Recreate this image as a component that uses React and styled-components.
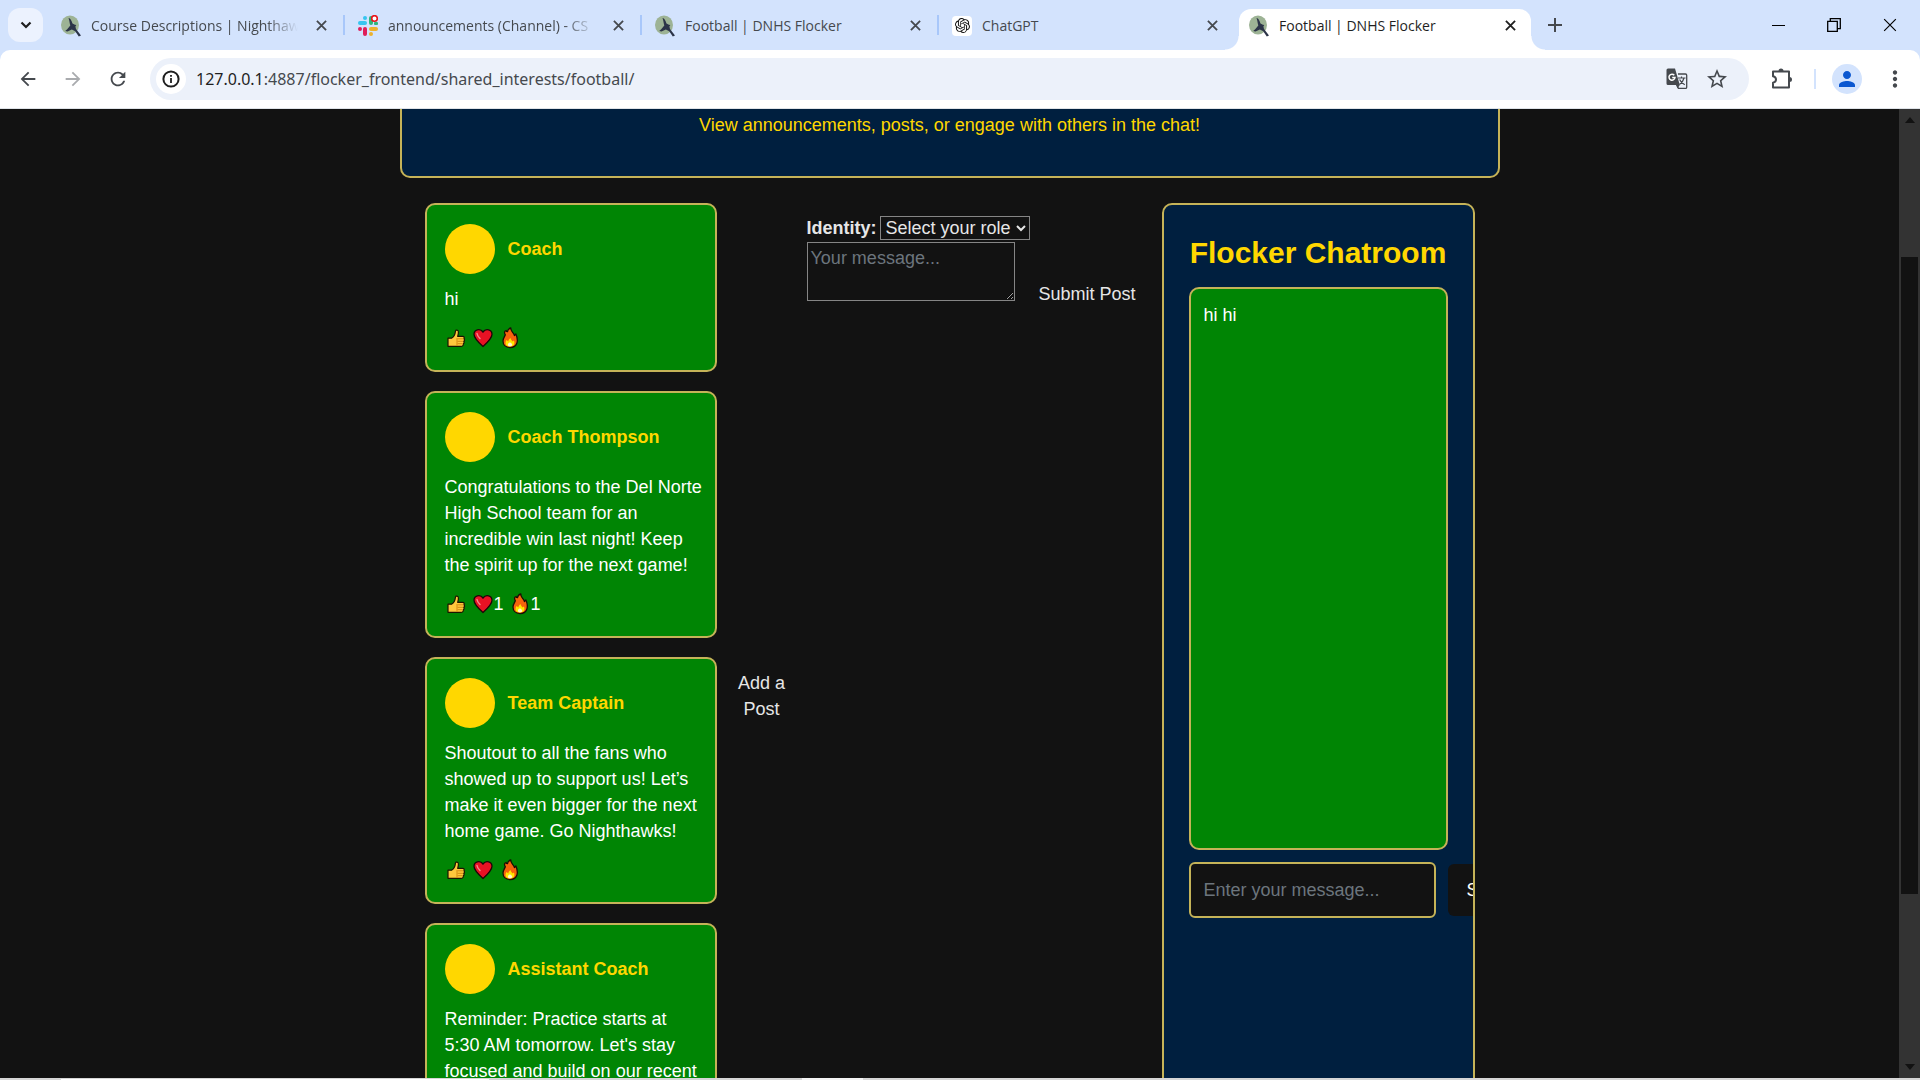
import React from "react";
import styled, { createGlobalStyle, css } from "styled-components";
import {
  MdArrowBack,
  MdArrowForward,
  MdMoreVert,
  MdPerson,
  MdRefresh,
  MdStarBorder,
} from "react-icons/md";
import { SiOpenai } from "react-icons/si";

const gold = "#c5b358";
const yellow = "#ffd700";
const navy = "#001f3f";
const green = "#008504";
const dark = "#121212";
const strip = "#d3e3fd";

const GlobalStyle = createGlobalStyle`
  *, *::before, *::after { box-sizing: border-box; }
  body { margin: 0; overflow: hidden; }
  button, input, select, textarea { font: inherit; color: inherit; margin: 0; }
  button { border: 0; background: none; padding: 0; }
  p, h2 { margin: 0; }
`;

const Window = styled.div`
  height: 100vh;
  display: flex;
  flex-direction: column;
  background: ${strip};
  font-family: "Open Sans", "Noto Sans", sans-serif;
  color: #1f1f1f;
`;

/* ---------- tab strip ---------- */

const TabStrip = styled.header`
  height: 50px;
  flex: none;
  display: flex;
  align-items: center;
`;

const SearchTabs = styled.button`
  width: 35px;
  height: 34px;
  margin: 0 8px;
  border-radius: 12px;
  background: #ecf2fe;
  display: grid;
  place-items: center;
`;

const Tabs = styled.nav`
  display: flex;
  align-self: stretch;
  padding-top: 9px;
  min-width: 0;
`;

const Tab = styled.div`
  position: relative;
  width: 297px;
  min-width: 0;
  padding: 0 17px 8px 10px;
  display: flex;
  align-items: center;
  font-size: 14px;
  line-height: 20px;
  color: #45494e;
  ${(p) =>
    p.$divider &&
    css`
      &::after {
        content: "";
        position: absolute;
        right: 3px;
        top: 6px;
        width: 2px;
        height: 20px;
        background: #a8c7fa;
      }
    `}
  ${(p) =>
    p.$active &&
    css`
      width: 292px;
      padding-right: 11px;
      color: #1f1f1f;
      background: #fff;
      border-radius: 12px 12px 0 0;
      &::before,
      &::after {
        content: "";
        position: absolute;
        bottom: 0;
        width: 14px;
        height: 14px;
      }
      &::before {
        left: -14px;
        background: radial-gradient(circle at 0 0, transparent 13px, #fff 14px);
      }
      &::after {
        right: -14px;
        background: radial-gradient(circle at 100% 0, transparent 13px, #fff 14px);
      }
    `}
`;

const TabTitle = styled.span`
  flex: 1;
  min-width: 0;
  margin: 0 13px 0 10px;
  white-space: nowrap;
  overflow: hidden;
  mask-image: ${(p) => (p.$fade ? "linear-gradient(to right, #000 85%, transparent)" : "none")};
`;

const IconButton = styled.button`
  flex: none;
  width: ${(p) => p.$w || 20}px;
  height: ${(p) => p.$h || 20}px;
  display: grid;
  place-items: center;
  color: ${(p) => p.$color || "#45494e"};
`;

const NewTab = styled(IconButton)`
  margin-left: 10px;
`;

const WindowControls = styled.div`
  margin-left: auto;
  display: flex;
  margin-right: 2px;
`;

/* ---------- toolbar ---------- */

const Toolbar = styled.div`
  height: 59px;
  flex: none;
  display: flex;
  align-items: center;
  padding: 0 18px 1px 5px;
  background: #fff;
  border-bottom: 1px solid #dfe3e8;
  border-radius: 10px 10px 0 0;
`;

const AddressBar = styled.div`
  flex: 1;
  height: 42px;
  margin: 0 17px 0 10px;
  padding: 0 17px 0 6px;
  display: flex;
  align-items: center;
  gap: 10px;
  border-radius: 21px;
  background: #ecf1fa;
`;

const SiteInfo = styled.button`
  width: 30px;
  height: 30px;
  border-radius: 50%;
  background: #fff;
  display: grid;
  place-items: center;
`;

const Address = styled.div`
  flex: 1;
  font-family: "Noto Sans", "Open Sans", sans-serif;
  font-size: 16px;
  line-height: 24px;
  color: #45494e;
  white-space: nowrap;
`;

const Host = styled.span`
  color: #1f1f1f;
`;

const ToolbarDivider = styled.span`
  width: 2px;
  height: 20px;
  margin: 0 16px;
  background: ${strip};
`;

const Profile = styled(IconButton)`
  border-radius: 50%;
  background: ${strip};
  margin-right: 20px;
`;

/* ---------- page ---------- */

const Viewport = styled.div`
  flex: 1;
  min-height: 0;
  display: flex;
  background: ${dark};
`;

const Page = styled.main`
  flex: 1;
  min-width: 0;
  height: 100%;
  overflow: hidden;
  font-family: "Liberation Sans", Arial, sans-serif;
  font-size: 18px;
  line-height: 26px;
  color: #e6e6e6;
`;

const Wrapper = styled.div`
  max-width: 1100px;
  margin: 0 auto;
`;

const Hero = styled.section`
  padding: 3px 24px 38px;
  border: 2px solid ${gold};
  border-top: 0;
  border-radius: 0 0 10px 10px;
  background: ${navy};
  color: ${yellow};
  text-align: center;
`;

const Columns = styled.div`
  display: flex;
  padding: 25px 25px 0;
`;

const Feed = styled.section`
  flex: none;
  width: 292px;
`;

const Card = styled.article`
  margin-bottom: 19px;
  padding: 19px 12px 19px 18px;
  border: 2px solid ${gold};
  border-radius: 10px;
  background: ${green};
  color: #fff;
`;

const CardHead = styled.div`
  display: flex;
  align-items: center;
  gap: 13px;
  margin-bottom: 12px;
  font-weight: bold;
  color: ${yellow};
`;

const Avatar = styled.span`
  width: 50px;
  height: 50px;
  border-radius: 50%;
  background: ${yellow};
`;

const Reactions = styled.div`
  display: flex;
  gap: 5px;
  margin-top: 13px;
`;

const Reaction = styled.button`
  display: flex;
  align-items: center;
  height: 26px;
`;

const AddColumn = styled.div`
  flex: none;
  width: 90px;
  display: flex;
  align-items: center;
`;

const AddPost = styled.button`
  padding: 0 20px;
  text-align: center;
`;

const PostForm = styled.form`
  flex: 1;
  min-width: 0;
  padding-top: 12px;
`;

const RoleRow = styled.div`
  display: flex;
  align-items: center;
  gap: 3px;
  margin-bottom: 1px;
`;

const RoleLabel = styled.label`
  font-weight: bold;
`;

const RoleSelect = styled.select`
  height: 24px;
  padding: 0 1px;
  border: 1px solid #858585;
  border-radius: 0;
  background: ${dark};
`;

const MessageRow = styled.div`
  display: flex;
  align-items: flex-end;
`;

const PostText = styled.textarea`
  flex: none;
  width: 208px;
  height: 59px;
  padding: 2px 3px;
  border: 1px solid #858585;
  background: ${dark};
  color-scheme: dark;
  &::placeholder {
    color: #6c757d;
  }
`;

const Submit = styled.button`
  padding-left: 24px;
  line-height: 14px;
  white-space: nowrap;
`;

const Chat = styled.section`
  flex: none;
  width: 313px;
  padding: 26px 25px;
  border: 2px solid ${gold};
  border-radius: 10px;
  background: ${navy};
  overflow: hidden;
`;

const ChatTitle = styled.h2`
  margin-bottom: 12px;
  font-size: 30px;
  line-height: 44px;
  text-align: center;
  white-space: nowrap;
  color: ${yellow};
`;

const ChatLog = styled.div`
  height: 563px;
  margin-bottom: 12px;
  padding: 13px;
  border: 2px solid ${gold};
  border-radius: 10px;
  background: ${green};
  color: #fff;
`;

const ChatForm = styled.form`
  display: flex;
  align-items: center;
  gap: 12px;
`;

const ChatInput = styled.input`
  flex: none;
  width: 247px;
  height: 56px;
  padding: 0 13px;
  border: 2px solid ${gold};
  border-radius: 6px;
  background: ${dark};
  &::placeholder {
    color: #6c757d;
  }
`;

const Send = styled.button`
  flex: none;
  height: 52px;
  padding: 0 19px;
  border-radius: 6px;
  background: ${dark};
  color: #fff;
`;

const Scrollbar = styled.div`
  flex: none;
  width: 21px;
  padding: 8px 2px;
  display: flex;
  flex-direction: column;
  align-items: center;
  background: #333;
`;

const Track = styled.div`
  flex: 1;
  align-self: stretch;
  padding: 134px 0 170px;
  display: flex;
`;

const Thumb = styled.div`
  flex: 1;
  background: ${dark};
`;

const Taskbar = styled.footer`
  flex: none;
  height: 2px;
  padding-left: 61px;
  background: #d6d6d6;
  display: flex;
  align-items: flex-end;
`;

const TaskbarSearch = styled.span`
  width: 428px;
  height: 1px;
  background: #fff;
`;

const TaskbarApp = styled.span`
  width: 61px;
  height: 2px;
  margin-left: 313px;
  background: #f4f4f4;
`;

/* ---------- drawings ---------- */

const Cross = ({ size = 11, weight = 2 }) => (
  <svg width={size} height={size} viewBox="0 0 12 12" fill="none" stroke="currentColor" strokeWidth={weight}>
    <path d="M1 1l10 10M11 1L1 11" />
  </svg>
);

const Hawk = () => (
  <svg width="20" height="22" viewBox="0 0 20 22">
    <ellipse cx="9" cy="10" rx="9" ry="9.5" fill="#9db395" />
    <path
      d="M7.5 3c2 .2 3 2.6 4 5.6l2.4 1.2 1.4.2-.9 1.4.6 2.6 5 6.5-2.2 1-3.6-5.2-3.3-1.7L6.500 16.500l-2.300-.500 2-1.800 3.100-3.700C8.500 8 8.400 5 7.500 3z"
      fill="#2c3448"
    />
  </svg>
);

const Slack = () => (
  <svg width="20" height="22" viewBox="0 0 20 22">
    <g fill="#36c5f0">
      <rect x="0" y="6" width="9" height="4" rx="2" />
      <rect x="5" y="1" width="4" height="4" rx="2" />
    </g>
    <rect x="11" y="1" width="4" height="9" rx="2" fill="#2eb67d" />
    <g fill="#e01e5a">
      <rect x="0" y="12" width="4" height="4" rx="2" />
      <rect x="5" y="12" width="4" height="9" rx="2" />
    </g>
    <g fill="#ecb22e">
      <rect x="11" y="12" width="9" height="4" rx="2" />
      <rect x="11" y="17" width="4" height="4" rx="2" />
    </g>
    <rect x="16" y="7" width="4" height="3" rx="1" fill="#2eb67d" />
    <circle cx="16.500" cy="3.500" r="2.800" fill="#fff" stroke="#e8151b" strokeWidth="1.600" />
  </svg>
);

const GptBox = styled.span`
  width: 20px;
  height: 20px;
  border-radius: 4px;
  background: #fff;
  display: grid;
  place-items: center;
  color: #111;
`;

const Gpt = () => (
  <GptBox>
    <SiOpenai size={15} />
  </GptBox>
);

const Translate = () => (
  <svg width="22" height="22" viewBox="0 0 22 22" fill="none">
    <path d="M12 6h7.500a1.200 1.200 0 011.200 1.200v12a1.200 1.200 0 01-1.200 1.200H12.500L10.500 17" stroke="#45494e" strokeWidth="1.300" />
    <path d="M2 .5h7L13.800 17H2A1.500 1.500 0 01.5 15.500V2A1.500 1.500 0 012 .5zM10.500 17h3.300l-2.300 3.500z" fill="#45494e" />
    <path d="M8.300 7.200A3 3 0 109 9.500H6.200" stroke="#fff" strokeWidth="1.500" />
    <path d="M12 10h7.500M15.500 8.500V10M18 10c-.6 2.800-2.300 5-4.500 6.500M13.600 11.500c1 2.300 2.800 4 5.200 5.300" stroke="#45494e" strokeWidth="1.200" />
  </svg>
);

const Puzzle = () => (
  <svg width="24" height="24" viewBox="0 0 24 24" fill="none" stroke="#45494e" strokeWidth="2" strokeLinejoin="round">
    <path d="M3 4.500h16v16H3v-4.800c1.900-.4 3-1.600 3-3.200s-1.100-2.800-3-3.200z" />
    <path d="M8.500 4a2.500 2.500 0 015 0zM19.500 10a2.500 2.500 0 010 5z" fill="#45494e" stroke="none" />
  </svg>
);

const Info = () => (
  <svg width="18" height="18" viewBox="0 0 18 18" fill="none" stroke="#1f1f1f" strokeWidth="2">
    <circle cx="9" cy="9" r="7.600" />
    <path d="M9 8v5M9 5v1.700" strokeWidth="1.800" />
  </svg>
);

const ThumbUp = () => (
  <svg width="22" height="22" viewBox="0 0 22 22" stroke="#1c1400" strokeWidth="1.200" strokeLinejoin="round">
    <path
      d="M3 11.200h3.500c2-1 3.600-3.400 4-7.200.3-1.500 2.700-1.200 2.900.7.100 1.700-.3 3.200-.7 4.600h5c1.500 0 2 1.500 1.200 2.500.9.700.7 2-.1 2.500.6.800.3 2-.5 2.400.3 1.300-.5 2.600-2 2.600H3z"
      fill="#ffc83d"
    />
    <path d="M12.500 11.800h5.500M12.500 14.300h5.500M12.500 16.700h5M12 11v8" stroke="#d68a12" strokeWidth="1" fill="none" />
  </svg>
);

const Heart = () => (
  <svg width="22" height="22" viewBox="0 0 22 22">
    <path
      d="M11 19.500C7 16 2 11.600 2 7.300 2 2.800 8 .8 11 5c3-4.200 9-2.200 9 2.300 0 4.300-5 8.700-9 12.200z"
      fill="#e81224"
      stroke="#1a0508"
      strokeWidth="1.300"
    />
    <path d="M5 6.500c.3 2 1.400 3.500 3 5" stroke="#f7858f" strokeWidth="1.500" fill="none" strokeLinecap="round" />
  </svg>
);

const Fire = () => (
  <svg width="22" height="22" viewBox="0 0 22 22">
    <path
      d="M11 20.500c-4.500 0-7-3-7-6.500 0-2.800 1.500-4 2.300-6.200C5 5.500 5.500 4 7 3.500c.3 1 .8 1.200 1.500 1.200C8.800 2.800 9.800 1.500 11.800 1c-.3 3.700 3 4.400 3.600 7.500l1.500-1.500C19.500 13 19 20.500 11 20.500z"
      fill="#f7630c"
      stroke="#1a0d05"
      strokeWidth="1.300"
      strokeLinejoin="round"
    />
    <path d="M11 19.500c-5.500 0-5-4.800-3.300-6.500l1.600 1.500c.2-1.700 1-2.500 2.200-3.500.3 2 1.500 2.300 2 3.500l1.400-1c1.200 2.500.5 6-3.900 6z" fill="#ffe600" />
    <path d="M11 19.300c-2.500 0-2.600-2-1.500-3l1.500-1 1.600 1.200c1 1 .8 2.800-1.600 2.800z" fill="#fff6d0" />
  </svg>
);

const Triangle = ({ down }) => (
  <svg width="10" height="6" viewBox="0 0 10 6">
    <path d={down ? "M0 0h10L5 6z" : "M0 6h10L5 0z"} fill="#121212" />
  </svg>
);

/* ---------- data ---------- */

const tabs = [
  { title: "Course Descriptions | Nighthaw", icon: Hawk, fade: true, divider: true },
  { title: "announcements (Channel) - CS", icon: Slack, fade: true, divider: true },
  { title: "Football | DNHS Flocker", icon: Hawk, divider: true },
  { title: "ChatGPT", icon: Gpt },
  { title: "Football | DNHS Flocker", icon: Hawk, active: true },
];

const posts = [
  { author: "Coach", text: "hi" },
  {
    author: "Coach Thompson",
    text: "Congratulations to the Del Norte High School team for an incredible win last night! Keep the spirit up for the next game!",
    hearts: 1,
    fires: 1,
  },
  {
    author: "Team Captain",
    text: "Shoutout to all the fans who showed up to support us! Let’s make it even bigger for the next home game. Go Nighthawks!",
  },
  {
    author: "Assistant Coach",
    text: "Reminder: Practice starts at 5:30 AM tomorrow. Let's stay focused and build on our recent win!",
  },
];

const Post = ({ author, text, hearts, fires }) => (
  <Card>
    <CardHead>
      <Avatar />
      {author}
    </CardHead>
    <p>{text}</p>
    <Reactions>
      <Reaction type="button" aria-label="Like"><ThumbUp /></Reaction>
      <Reaction type="button" aria-label="Love"><Heart />{hearts}</Reaction>
      <Reaction type="button" aria-label="Fire"><Fire />{fires}</Reaction>
    </Reactions>
  </Card>
);

export default function App() {
  return (
    <Window>
      <GlobalStyle />
      <TabStrip>
        <SearchTabs aria-label="Search tabs">
          <svg width="12" height="8" viewBox="0 0 12 8" fill="none" stroke="#1f1f1f" strokeWidth="2.200">
            <path d="M1.500 1.500L6 6l4.500-4.500" />
          </svg>
        </SearchTabs>
        <Tabs>
          {tabs.map(({ title, icon: Icon, active, fade, divider }, i) => (
            <Tab key={i} $active={active} $divider={divider}>
              <Icon />
              <TabTitle $fade={fade}>{title}</TabTitle>
              <IconButton aria-label="Close tab" $color={active ? "#1f1f1f" : undefined}>
                <Cross />
              </IconButton>
            </Tab>
          ))}
        </Tabs>
        <NewTab $w={28} $h={28} aria-label="New tab">
          <svg width="14" height="14" viewBox="0 0 14 14" stroke="currentColor" strokeWidth="2">
            <path d="M7 0v14M0 7h14" />
          </svg>
        </NewTab>
        <WindowControls>
          <IconButton $w={56} $h={40} $color="#000" aria-label="Minimize">
            <svg width="13" height="13" viewBox="0 0 13 13" stroke="currentColor">
              <path d="M0 6.500h13" />
            </svg>
          </IconButton>
          <IconButton $w={56} $h={40} $color="#000" aria-label="Restore">
            <svg width="14" height="14" viewBox="0 0 14 14" stroke="currentColor" fill="none" strokeWidth="1.300">
              <path d="M.7 3.300h9.600v10H.7zM3.300 3V.7h10v10h-3" />
            </svg>
          </IconButton>
          <IconButton $w={56} $h={40} $color="#000" aria-label="Close window">
            <Cross size={14} weight={1} />
          </IconButton>
        </WindowControls>
      </TabStrip>

      <Toolbar>
        <IconButton $w={45} $h={40} aria-label="Back"><MdArrowBack size={22} /></IconButton>
        <IconButton $w={45} $h={40} $color="#a9abae" aria-label="Forward"><MdArrowForward size={22} /></IconButton>
        <IconButton $w={45} $h={40} aria-label="Reload"><MdRefresh size={22} /></IconButton>
        <AddressBar>
          <SiteInfo aria-label="Site information"><Info /></SiteInfo>
          <Address><Host>127.0.0.1</Host>:4887/flocker_frontend/shared_interests/football/</Address>
          <IconButton $w={30} $h={30} aria-label="Translate"><Translate /></IconButton>
          <IconButton $w={30} $h={30} aria-label="Bookmark"><MdStarBorder size={24} /></IconButton>
        </AddressBar>
        <IconButton $w={32} $h={32} aria-label="Extensions"><Puzzle /></IconButton>
        <ToolbarDivider />
        <Profile $w={30} $h={30} $color="#0b57d0" aria-label="Profile"><MdPerson size={24} /></Profile>
        <IconButton $w={20} $h={32} aria-label="Menu"><MdMoreVert size={26} /></IconButton>
      </Toolbar>

      <Viewport>
        <Page>
          <Wrapper>
            <Hero>
              <p>View announcements, posts, or engage with others in the chat!</p>
            </Hero>
            <Columns>
              <Feed>
                {posts.map((post) => (
                  <Post key={post.author} {...post} />
                ))}
              </Feed>
              <AddColumn>
                <AddPost type="button">Add a Post</AddPost>
              </AddColumn>
              <PostForm>
                <RoleRow>
                  <RoleLabel htmlFor="role">Identity:</RoleLabel>
                  <RoleSelect id="role" defaultValue="">
                    <option value="">Select your role</option>
                  </RoleSelect>
                </RoleRow>
                <MessageRow>
                  <PostText aria-label="Your message" placeholder="Your message..." />
                  <Submit type="button">Submit Post</Submit>
                </MessageRow>
              </PostForm>
              <Chat>
                <ChatTitle>Flocker Chatroom</ChatTitle>
                <ChatLog>hi hi</ChatLog>
                <ChatForm>
                  <ChatInput aria-label="Enter your message" placeholder="Enter your message..." />
                  <Send type="button">Send</Send>
                </ChatForm>
              </Chat>
            </Columns>
          </Wrapper>
        </Page>
        <Scrollbar>
          <Triangle />
          <Track>
            <Thumb />
          </Track>
          <Triangle down />
        </Scrollbar>
      </Viewport>
      <Taskbar>
        <TaskbarSearch />
        <TaskbarApp />
      </Taskbar>
    </Window>
  );
}
